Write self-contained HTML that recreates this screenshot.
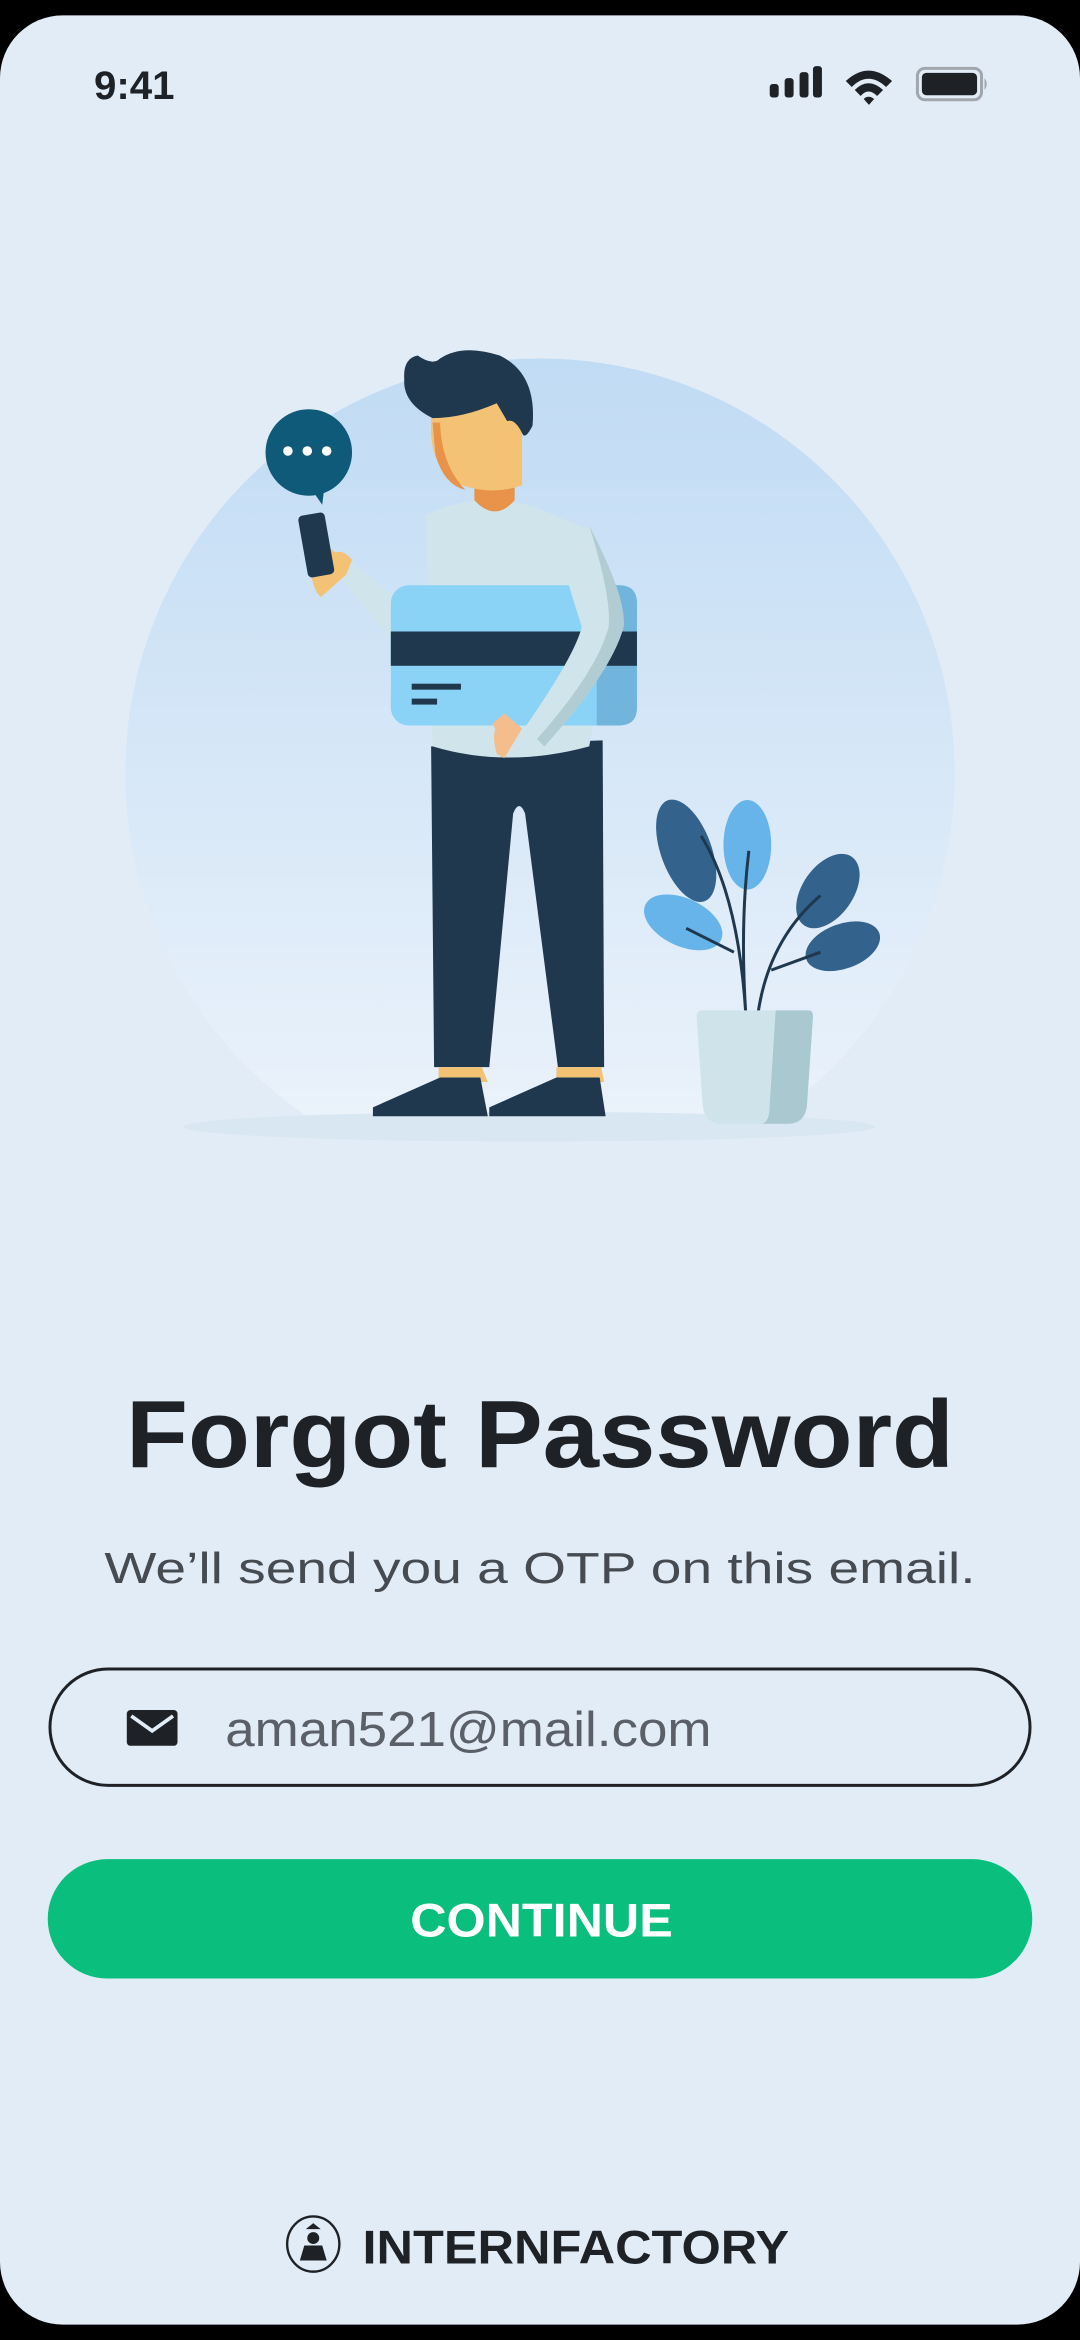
<!DOCTYPE html>
<html><head><meta charset="utf-8"><style>
html,body{margin:0;padding:0;background:#000;}
svg{display:block;}
text{font-family:"Liberation Sans",sans-serif;}
</style></head><body>
<svg width="1080" height="2340" viewBox="0 0 724 1568" xmlns="http://www.w3.org/2000/svg">
<defs>
<linearGradient id="cg" x1="0" y1="0" x2="0" y2="1">
<stop offset="0" stop-color="#c0dbf4"/><stop offset="1" stop-color="#eef4fb"/>
</linearGradient>
<clipPath id="cc"><rect x="0" y="0" width="724" height="748"/></clipPath>
</defs>
<rect x="0" y="0" width="724" height="1568" fill="#000"/>
<rect x="0" y="10" width="724" height="1548" rx="42" fill="#e2ecf7"/>

<!-- status bar -->
<text x="63" y="66" font-size="27" font-weight="bold" fill="#1e2226">9:41</text>
<rect x="516" y="56" width="6" height="9" rx="2" fill="#1e2226"/>
<rect x="526" y="52" width="6" height="13" rx="2" fill="#1e2226"/>
<rect x="536" y="48" width="6" height="17" rx="2" fill="#1e2226"/>
<rect x="545" y="44" width="6" height="21" rx="2" fill="#1e2226"/>
<path d="M567 54 Q582 40 598 54 L594 58 Q582 47 571 58Z M573 60 Q582 51 592 60 L588 64 Q582 58 577 64Z M579 66 Q582 63 586 66 L582.5 70Z" fill="#1e2226"/>
<rect x="615" y="45.5" width="43" height="21" rx="5" fill="none" stroke="#a1a6ad" stroke-width="2"/>
<rect x="618" y="48.5" width="37" height="15" rx="3" fill="#1e2226"/>
<path d="M660 52 Q663 56 660 60Z" fill="#a1a6ad"/>

<!-- illustration -->
<g clip-path="url(#cc)"><circle cx="362" cy="518" r="278" fill="url(#cg)"/></g>
<ellipse cx="355" cy="755" rx="232" ry="10" fill="#d9e7f3"/>

<!-- plant -->
<ellipse cx="460" cy="570" rx="17" ry="36" transform="rotate(-20 460 570)" fill="#33628c"/>
<ellipse cx="501" cy="566" rx="16" ry="30" fill="#66b4ea"/>
<ellipse cx="555" cy="597" rx="17" ry="28" transform="rotate(35 555 597)" fill="#33628c"/>
<ellipse cx="458" cy="618" rx="28" ry="16" transform="rotate(25 458 618)" fill="#66b4ea"/>
<ellipse cx="565" cy="634" rx="26" ry="15" transform="rotate(-20 565 634)" fill="#33628c"/>
<path d="M500 680 Q495 600 470 560 M500 680 Q496 620 502 570 M508 680 Q515 630 550 600 M460 622 L492 638 M517 650 L550 638" stroke="#1f384d" stroke-width="2" fill="none"/>
<path d="M467 681 Q467 677 471 677 L542 677 Q545 677 545 681 L541 740 Q540 753 528 753 L484 753 Q472 753 471 740Z" fill="#cfe3ea"/>
<path d="M520 677 L542 677 Q545 677 545 681 L541 740 Q540 753 528 753 L510 753 Q516 753 516 740Z" fill="#a9c8d0"/>

<!-- speech bubble -->
<ellipse cx="207" cy="303" rx="29" ry="29" fill="#0f5a78"/>
<path d="M209 328 L216 338 L218 322Z" fill="#0f5a78"/>
<circle cx="193" cy="302" r="3.2" fill="#fff"/><circle cx="206" cy="302" r="3.2" fill="#fff"/><circle cx="219" cy="302" r="3.2" fill="#fff"/>

<!-- person -->
<path d="M289 500 L404 496 L405 715 L374 715 L352 545 Q348 535 344 545 L328 715 L291 715Z" fill="#1f384d"/>
<path d="M294 715 L323 715 L327 725 L294 725Z M373 715 L403 715 L405 725 L373 725Z" fill="#f3c275"/>
<path d="M250 742 L295 722 L322 722 L327 748 L250 748Z" fill="#1f384d"/>
<path d="M328 742 L373 722 L402 722 L406 748 L328 748Z" fill="#1f384d"/>
<path d="M214 370 L230 372 L290 420 L280 450 Z" fill="#d0e4ec"/>
<path d="M210 360 Q205 390 215 400 L232 385 L236 375 Q230 368 225 370Z" fill="#f3c275"/>
<rect x="203" y="344" width="18" height="42" rx="3" transform="rotate(-10 212 365)" fill="#1f384d"/>
<path d="M285 345 Q320 328 360 340 L395 355 L410 420 L395 500 Q340 515 290 500 Z" fill="#d0e4ec"/>
<path d="M318 310 L345 310 L345 335 Q332 350 318 335Z" fill="#e8924a"/>
<path d="M289 270 L350 270 L350 325 Q330 332 310 325 Q290 315 289 290Z" fill="#f3c275"/>
<path d="M290 283 L292 305 Q298 325 312 328 Q296 312 295 283Z" fill="#e8924a"/>
<path d="M271 254 Q270 240 280 238 Q290 245 295 240 Q310 230 335 238 Q360 250 357 285 Q352 295 350 290 Q345 280 340 282 L333 270 Q310 280 290 280 Q270 270 271 254Z" fill="#1f384d"/>
<rect x="262" y="392" width="165" height="94" rx="12" fill="#8ad3f7"/>
<path d="M400 392 L415 392 Q427 392 427 404 L427 474 Q427 486 415 486 L400 486Z" fill="#72b5dc"/>
<rect x="262" y="423" width="165" height="23" fill="#1f384d"/>
<rect x="276" y="458" width="33" height="4" fill="#1f384d"/>
<rect x="276" y="468" width="17" height="4" fill="#1f384d"/>
<path d="M372 362 L395 352 Q420 400 418 420 Q410 450 365 500 L350 490 Q385 440 390 420 Z" fill="#d0e4ec"/>
<path d="M395 352 Q420 400 418 420 Q410 450 365 500 L360 495 Q400 450 408 420 Q410 400 395 352Z" fill="#b2ccd4"/>
<path d="M338 478 L350 488 L338 508 L333 505 Q330 495 332 488 L330 485Z" fill="#f5bd8b"/>

<!-- text -->
<text x="362" y="983" font-size="64" font-weight="bold" fill="#1e2226" text-anchor="middle" textLength="555" lengthAdjust="spacingAndGlyphs">Forgot Password</text>
<text x="362" y="1061" font-size="29" fill="#464b52" text-anchor="middle" textLength="584" lengthAdjust="spacingAndGlyphs">We’ll send you a OTP on this email.</text>

<rect x="33.5" y="1118.5" width="657" height="78" rx="39" fill="none" stroke="#1e2226" stroke-width="2"/>
<rect x="85" y="1146" width="34" height="24" rx="2.5" fill="#1e2226"/>
<path d="M88 1150 L102 1160 L116 1150" stroke="#e2ecf7" stroke-width="2.5" fill="none"/>
<text x="151" y="1170" font-size="33" fill="#5b6068" textLength="326" lengthAdjust="spacingAndGlyphs">aman521@mail.com</text>

<rect x="32" y="1246" width="660" height="80" rx="40" fill="#0abf7e"/>
<text x="363" y="1298" font-size="32" font-weight="bold" fill="#fff" text-anchor="middle" textLength="176" lengthAdjust="spacingAndGlyphs">CONTINUE</text>

<ellipse cx="210" cy="1504" rx="17.5" ry="18.5" fill="none" stroke="#1e2226" stroke-width="1.6"/>
<circle cx="210" cy="1500" r="4" fill="#1e2226"/>
<path d="M205 1494 L210 1490 L215 1494Z" fill="#1e2226"/>
<path d="M201 1515 L204 1505 L216 1505 L219 1515Z" fill="#1e2226"/>
<text x="243" y="1517" font-size="32" font-weight="bold" fill="#1e2226" textLength="286" lengthAdjust="spacingAndGlyphs">INTERNFACTORY</text>
</svg>
</body></html>
